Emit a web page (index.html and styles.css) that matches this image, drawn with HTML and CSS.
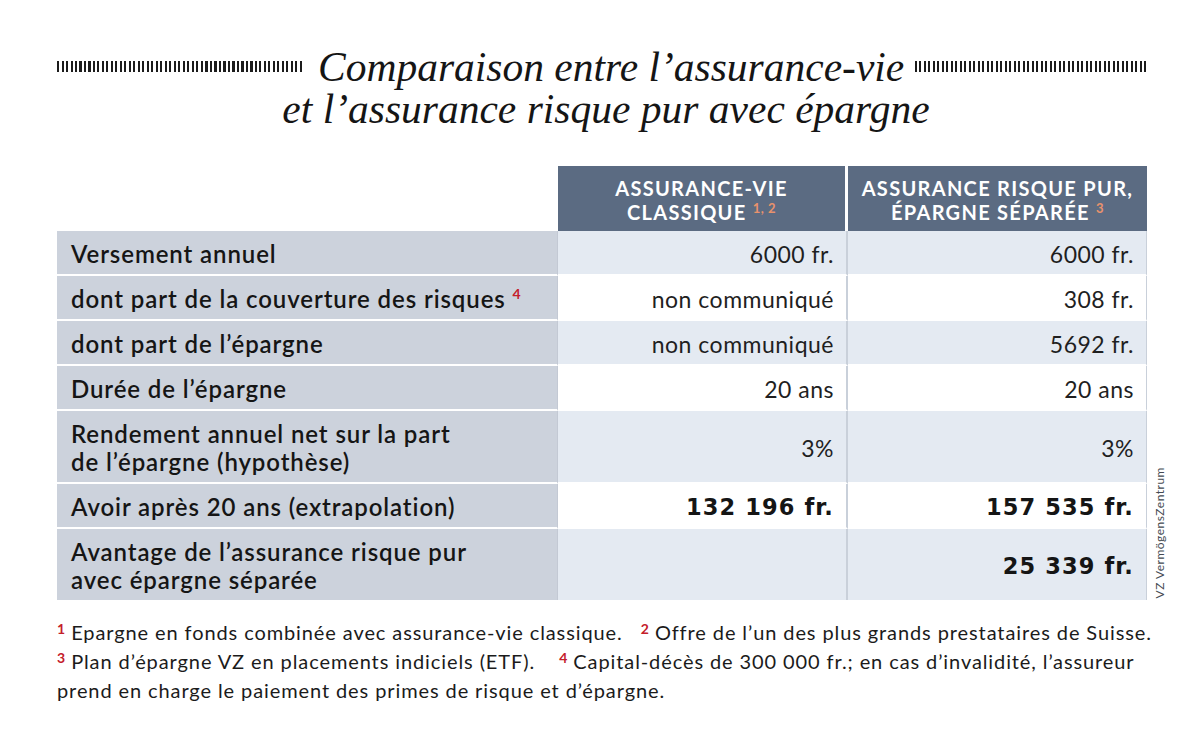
FILE: index.html
```html
<!DOCTYPE html>
<html lang="fr">
<head>
<meta charset="utf-8">
<title>Comparaison assurance-vie</title>
<link rel="stylesheet" href="styles.css">
</head>
<body>
<div class="page">
  <h1 class="title">
    <span class="title-line first"><span class="bars left"></span><span class="title-text">Comparaison entre l’assurance-vie</span><span class="bars right"></span></span>
    <span class="title-line second">et l’assurance risque pur avec épargne</span>
  </h1>

  <div class="table-wrap">
    <table class="cmp">
      <thead>
        <tr>
          <th class="blank"></th>
          <th class="hcol c1">ASSURANCE-VIE<br>CLASSIQUE <sup class="hnote">1, 2</sup></th>
          <th class="hcol c2">ASSURANCE RISQUE PUR,<br>ÉPARGNE SÉPARÉE <sup class="hnote">3</sup></th>
        </tr>
      </thead>
      <tbody>
        <tr class="tint">
          <td class="label">Versement annuel</td>
          <td class="val c1">6000 fr.</td>
          <td class="val c2">6000 fr.</td>
        </tr>
        <tr>
          <td class="label">dont part de la couverture des risques <sup class="note">4</sup></td>
          <td class="val c1">non communiqué</td>
          <td class="val c2">308 fr.</td>
        </tr>
        <tr class="tint">
          <td class="label">dont part de l’épargne</td>
          <td class="val c1">non communiqué</td>
          <td class="val c2">5692 fr.</td>
        </tr>
        <tr>
          <td class="label">Durée de l’épargne</td>
          <td class="val c1">20 ans</td>
          <td class="val c2">20 ans</td>
        </tr>
        <tr class="tint">
          <td class="label">Rendement annuel net sur la part<br>de l’épargne (hypothèse)</td>
          <td class="val c1">3%</td>
          <td class="val c2">3%</td>
        </tr>
        <tr>
          <td class="label">Avoir après 20 ans (extrapolation)</td>
          <td class="val c1 strong">132 196 fr.</td>
          <td class="val c2 strong">157 535 fr.</td>
        </tr>
        <tr class="tint last">
          <td class="label">Avantage de l’assurance risque pur<br>avec épargne séparée</td>
          <td class="val c1"></td>
          <td class="val c2 strong">25 339 fr.</td>
        </tr>
      </tbody>
    </table>
    <div class="source">VZ VermögensZentrum</div>
  </div>

  <p class="notes">
    <sup class="fn">1</sup> Epargne en fonds combinée avec assurance-vie classique. &nbsp; <sup class="fn">2</sup> Offre de l’un des plus grands prestataires de Suisse.<br>
    <sup class="fn">3</sup> Plan d’épargne VZ en placements indiciels (ETF). &nbsp; &nbsp;<sup class="fn">4</sup> Capital-décès de 300 000 fr.; en cas d’invalidité, l’assureur<br>
    prend en charge le paiement des primes de risque et d’épargne.
  </p>
</div>
</body>
</html>
```

FILE: styles.css
```css
html, body {
  margin: 0;
  padding: 0;
  background: #ffffff;
}

.page {
  padding: 46px 0 0 57px;
  width: 1143px;
  box-sizing: border-box;
  font-family: Lato, "Liberation Sans", sans-serif;
  color: #1b1b1b;
}

.title {
  margin: 0;
  width: 1091px;
  font-family: "Liberation Serif", "Times New Roman", serif;
  font-style: italic;
  font-weight: normal;
  font-size: 41.5px;
  line-height: 42px;
  color: #151515;
  text-align: center;
}

.title-line {
  display: block;
}

.title-line.first {
  display: flex;
}

.title-line.second {
  padding-left: 7px;
}

.title-text {
  margin: 0 11px 0 16px;
  white-space: nowrap;
}

.bars {
  align-self: flex-start;
  height: 11px;
  margin-top: 15px;
  background: repeating-linear-gradient(90deg, #1c1c1c 0 2px, transparent 2px 4.5px);
}

.bars.left {
  flex: 0 0 245px;
}

.bars.right {
  flex: 1;
}

.table-wrap {
  display: flex;
  align-items: flex-end;
  margin-top: 36px;
}

.cmp {
  border-collapse: separate;
  border-spacing: 0;
  width: 1091px;
  table-layout: fixed;
}

.cmp th, .cmp td {
  padding: 0;
}

.blank {
  width: 501px;
}

.cmp th.hcol {
  background: #5b6b82;
  color: #ffffff;
  font-weight: 700;
  font-size: 20px;
  line-height: 24px;
  height: 63px;
  padding-top: 2px;
  text-align: center;
  vertical-align: middle;
  letter-spacing: 1.3px;
}

.hcol.c1 {
  width: 287px;
  border-right: 3px solid #ffffff;
}

.hcol.c2 {
  width: 299px;
}

.hnote {
  color: #e8926c;
  font-size: 13px;
  letter-spacing: 0.5px;
  line-height: 0;
  vertical-align: 7px;
}

.cmp td {
  border-bottom: 2px solid #ffffff;
  font-size: 23px;
  line-height: 28px;
  padding-top: 9px;
  padding-bottom: 6px;
}

.cmp tr.last td {
  border-bottom: 0;
}

.label {
  background: #ccd2dc;
  padding-left: 14px !important;
  font-weight: 600;
  font-size: 24px !important;
  letter-spacing: 0.9px;
  color: #151515;
  border-right: 1px solid #c3c9d4;
  white-space: nowrap;
}

.val {
  text-align: right;
  padding-right: 12px !important;
  letter-spacing: 0.5px;
  color: #1f1f1f;
  white-space: nowrap;
}

.val.c1 {
  border-right: 2px solid #c9d0da;
}

.val.c2 {
  border-right: 1px solid #c9d0da;
}

.tint .val {
  background: #e4eaf2;
}

.val.strong {
  font-family: "DejaVu Sans", Lato, sans-serif;
  font-weight: 700;
  font-size: 22.5px !important;
  letter-spacing: 1.1px;
  color: #151515;
}

.note {
  color: #c4202a;
  font-size: 14px;
  font-weight: 700;
  letter-spacing: 0;
  line-height: 0;
  vertical-align: 9px;
}

.source {
  writing-mode: vertical-rl;
  transform: rotate(180deg);
  font-size: 12px;
  letter-spacing: 0.5px;
  color: #444a52;
  margin-left: 5px;
  margin-bottom: 2px;
}

.notes {
  margin: 18px 0 0 0;
  font-size: 20px;
  line-height: 29px;
  letter-spacing: 0.9px;
  color: #1b1b1b;
  white-space: nowrap;
}

.fn {
  color: #c4202a;
  font-weight: 700;
  font-size: 14px;
  letter-spacing: 0;
  line-height: 0;
  vertical-align: 6px;
}
```
